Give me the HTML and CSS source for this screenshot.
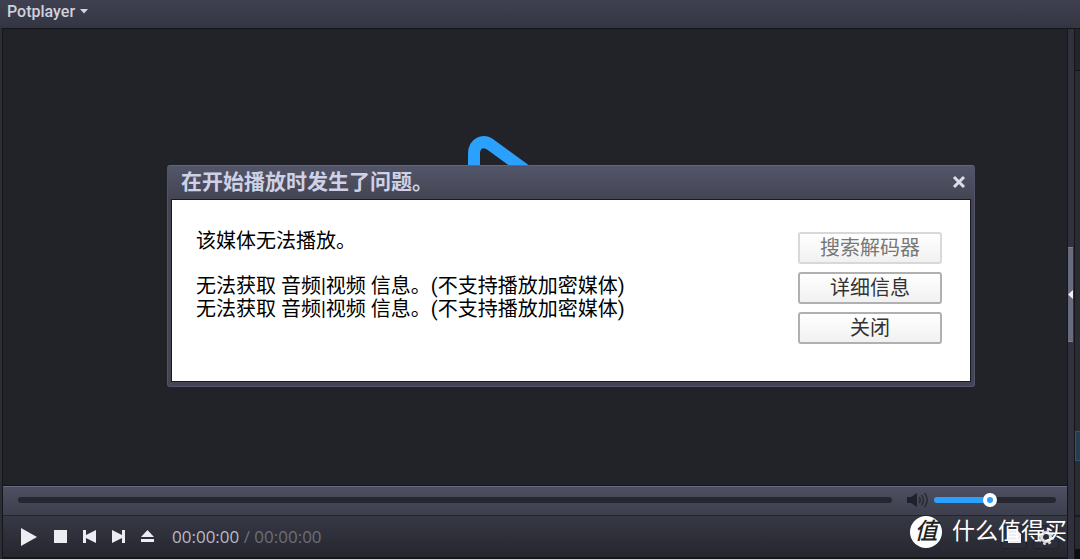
FILE: index.html
```
<!DOCTYPE html>
<html lang="zh-CN">
<head>
    <meta charset="UTF-8">
    <meta name="viewport" content="width=device-width, initial-scale=1.0">
    <title>Potplayer</title>

    <link rel="stylesheet" href="styles.css">
</head>
<body>

    <header class="titlebar">
        <button class="menu" type="button">Potplayer
            <svg width="8" height="5" viewBox="0 0 8 5"><path d="M0 0H8L4 4.5Z" fill="#d4d5de"/></svg>
        </button>
    </header>

    <div class="window">

        <main class="player">
            <div class="stage">
                <svg class="logo" width="136" height="164" viewBox="0 0 136 164">
                    <path d="M7 82V18C7 7 16 3 24 9L120 79Q124 82 120 85L24 155C16 161 7 157 7 146Z" fill="none" stroke="#2ba0fc" stroke-width="12"/>
                </svg>
            </div>

            <div class="seekbar">
                <input class="seek" type="range" min="0" max="100" value="0" aria-label="播放进度">
                <button class="mute" type="button" aria-label="静音">
                    <svg width="22" height="16" viewBox="0 0 22 16">
                        <path d="M0 5H4L10 1V15L4 11H0Z" fill="#20212a"/>
                        <path d="M12 5Q14.500 8 12 11M14.500 3Q18.500 8 14.500 13M17.500 1Q23 8 17.500 15" fill="none" stroke="#292a34" stroke-width="1.500"/>
                    </svg>
                </button>
                <input class="volume" type="range" min="0" max="100" value="45" aria-label="音量">
            </div>

            <div class="controls">
                <button type="button" aria-label="播放"><svg width="18" height="20" viewBox="0 0 18 20"><path d="M1 1L17 10L1 19Z"/></svg></button>
                <button type="button" aria-label="停止"><svg width="13" height="13" viewBox="0 0 13 13"><path d="M0 0H13V13H0Z"/></svg></button>
                <button type="button" aria-label="上一个"><svg width="13" height="13" viewBox="0 0 13 13"><path d="M0 0H3V5L13 0V13L3 8V13H0Z"/></svg></button>
                <button type="button" aria-label="下一个"><svg width="13" height="13" viewBox="0 0 13 13"><path d="M13 0H10V5L0 0V13L10 8V13H13Z"/></svg></button>
                <button type="button" aria-label="打开"><svg width="13" height="13" viewBox="0 0 13 13"><path d="M6.500 0L13 7H0ZM0 9H13V12H0Z"/></svg></button>
                <p class="time">00:00:00 <span>/ 00:00:00</span></p>
                <button class="tool" type="button" aria-label="播放列表"><svg width="13" height="13" viewBox="0 0 13 13"><path d="M0 0H9L13 4V13H0Z"/></svg></button>
                <button class="tool" type="button" aria-label="设置"><svg width="16" height="16" viewBox="0 0 16 16"><circle cx="8" cy="8" r="4.500" fill="none" stroke="#d8d9e0" stroke-width="3"/><circle cx="8" cy="8" r="6.500" fill="none" stroke="#d8d9e0" stroke-width="3" stroke-dasharray="2.550 2.550"/></svg></button>
            </div>
        </main>

        <div class="splitter">
            <button type="button" aria-label="展开列表">
                <svg width="5" height="9" viewBox="0 0 5 9"><path d="M5 0V9L0 4.500Z" fill="#f0f0f4"/></svg>
            </button>
        </div>

        <aside class="playlist">
            <div class="playlist-head"></div>
            <div class="playlist-body">
                <div class="playlist-item"></div>
            </div>
            <div class="playlist-foot"></div>
            <div class="playlist-end"></div>
        </aside>

    </div>

    <section class="dialog" role="dialog" aria-labelledby="dialog-title">
        <div class="dialog-head">
            <h1 id="dialog-title">在开始播放时发生了问题。</h1>
            <button class="close" type="button" aria-label="关闭">
                <svg width="14" height="14" viewBox="0 0 14 14"><path d="M2 2L12 12M12 2L2 12" stroke="#dcdde8" stroke-width="3"/></svg>
            </button>
        </div>
        <div class="dialog-body">
            <div class="message">
                <p>该媒体无法播放。</p>
                <p>无法获取 音频|视频 信息。(不支持播放加密媒体)<br>无法获取 音频|视频 信息。(不支持播放加密媒体)</p>
            </div>
            <div class="actions">
                <button type="button" disabled>搜索解码器</button>
                <button type="button">详细信息</button>
                <button type="button">关闭</button>
            </div>
        </div>
    </section>

    <div class="watermark">
        <span class="badge">值</span>
        <span>什么值得买</span>
    </div>

</body>
</html>
```
FILE: styles.css
```
*{
    box-sizing: border-box;
}

body{
    margin: 0;
    height: 100vh;
    display: flex;
    flex-direction: column;
    overflow: hidden;
    background: #2c2d37;
    color: #000;
    font-family: Roboto, "Noto Sans CJK SC", sans-serif;
}

h1, p{
    margin: 0;
}

button{
    margin: 0;
    padding: 0;
    border: none;
    background: none;
    font-family: inherit;
}

svg{
    display: block;
}

/* top bar */

.titlebar{
    height: 28px;
    padding: 0 7px;
    background: linear-gradient(#3f4152, #333541);
}

.menu{
    display: flex;
    align-items: center;
    gap: 5px;
    height: 22px;
    color: #d0d1dc;
    font-size: 16px;
    font-weight: 500;
}

.window{
    flex: 1;
    min-height: 0;
    display: grid;
    grid-template-columns: 1fr 6px 6px;
    padding-left: 2px;
}

/* video area */

.player{
    display: flex;
    flex-direction: column;
    min-height: 0;
    border: 1px solid #15161a;
    border-width: 1px 1px 2px;
}

.stage{
    flex: 1;
    min-height: 0;
    display: flex;
    justify-content: center;
    align-items: flex-start;
    padding-top: 107px;
    background: #222328;
}

.seekbar{
    display: flex;
    align-items: center;
    height: 29px;
    padding: 0 11px 2px 15px;
    border-top: 1px solid #686b80;
    background: linear-gradient(#4e5062, #3d3f4d);
    box-shadow: 0 -1px 0 #15161a;
}

.seek, .volume{
    appearance: none;
    margin: 0;
    height: 16px;
    background: none;
}

.seek{
    flex: 1;
    min-width: 0;
}

.volume{
    width: 122px;
}

.seek::-webkit-slider-runnable-track{
    height: 6px;
    border-radius: 3px;
    background: #262730;
}

.seek::-webkit-slider-thumb{
    appearance: none;
    width: 6px;
    height: 6px;
}

.volume::-webkit-slider-runnable-track{
    height: 6px;
    border-radius: 3px;
    background: linear-gradient(to right, #2ba0fc 45%, #262730 45%);
}

.volume::-webkit-slider-thumb{
    appearance: none;
    width: 14px;
    height: 14px;
    margin-top: -4px;
    border: 4px solid #fff;
    border-radius: 50%;
    background: #2ba0fc;
}

.mute{
    margin: 0 5px 0 15px;
}

.controls{
    display: flex;
    align-items: center;
    gap: 16px;
    height: 42px;
    padding: 0 8px 0 17px;
    border-top: 1px solid #24252d;
    background: linear-gradient(#363844, #25262e);
    fill: #ececf2;
}

.time{
    flex: 1;
    margin-left: 2px;
    color: #b9bac4;
    font-family: "Open Sans", sans-serif;
    font-size: 17px;
}

.time span{
    color: #6d6f7b;
}

.tool{
    display: flex;
    align-items: center;
    justify-content: center;
    width: 26px;
    height: 24px;
    margin-left: -10px;
    border: 1px solid #202129;
    border-radius: 3px;
    background: #2c2d37;
}

/* splitter and playlist edge */

.splitter{
    display: flex;
    align-items: center;
    border-top: 1px solid #15161a;
    background: #30313c;
}

.splitter button{
    display: flex;
    align-items: center;
    width: 5px;
    height: 95px;
    border: 1px solid #7d8092;
    border-width: 1px 0;
    background: #686b7e;
}

.playlist{
    display: flex;
    flex-direction: column;
    border-left: 1px solid #15161a;
    background: #2a2b33;
}

.playlist-head{
    height: 43px;
    border: 1px solid #15161a;
    border-width: 1px 0;
    background: #24252b;
}

.playlist-body{
    flex: 1;
    display: flex;
    align-items: flex-end;
    padding-bottom: 54px;
}

.playlist-item{
    width: 100%;
    height: 30px;
    border: 1px solid #285878;
    border-right: none;
    background: #263d50;
}

.playlist-foot{
    height: 34px;
    border-top: 2px solid #1b1c22;
    background: #292a33;
}

.playlist-end{
    height: 10px;
    background: #0d0e11;
}

/* error dialog */

.dialog{
    position: absolute;
    top: 165px;
    left: 167px;
    right: 105px;
    padding: 0 3px 4px;
    border: 1px solid #51546a;
    border-top-color: #62657a;
    border-radius: 3px;
    background: linear-gradient(#53566a, #434552 34px);
}

.dialog-head{
    display: flex;
    align-items: center;
    justify-content: space-between;
    height: 33px;
    padding: 0 5px 2px 10px;
}

.dialog-head h1{
    color: #cfd1e6;
    font-size: 21px;
    line-height: 30px;
    font-weight: bold;
}

.dialog-body{
    display: flex;
    justify-content: space-between;
    align-items: flex-start;
    padding: 30px 28px 37px 24px;
    border: 1px solid #1a1b20;
    background: #fff;
}

.message{
    display: flex;
    flex-direction: column;
    gap: 22px;
    font-size: 20px;
    line-height: 23px;
}

.actions{
    display: flex;
    flex-direction: column;
    gap: 8px;
    width: 144px;
    padding-top: 2px;
}

.actions button{
    height: 32px;
    border: 2px solid #b0b0b0;
    border-radius: 3px;
    background: linear-gradient(#fff, #f1f1f1);
    color: #333;
    font-size: 20px;
    line-height: 26px;
}

.actions button:disabled{
    border-color: #d8d8d8;
    color: #777;
}

/* site mark */

.watermark{
    position: absolute;
    right: 13px;
    bottom: 10px;
    display: flex;
    align-items: center;
    gap: 10px;
    color: #fff;
    font-size: 23px;
    line-height: 34px;
}

.badge{
    width: 32px;
    height: 32px;
    border-radius: 50%;
    background: #fff;
    color: #222;
    font-size: 23px;
    font-style: italic;
    font-weight: 500;
    line-height: 32px;
    text-align: center;
}
```
